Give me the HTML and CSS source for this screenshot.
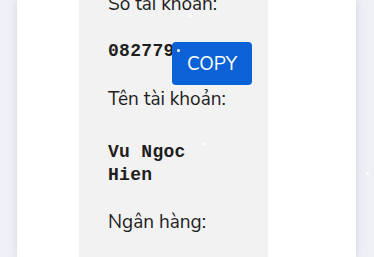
FILE: index.html
```html
<!DOCTYPE html>
<html lang="vi">
<head>
<meta charset="utf-8">
<link rel="stylesheet" href="styles.css">
</head>
<body>
<div class="card">
  <div class="panel">
    <div class="label first">Số tài khoản:</div>
    <div class="acct">
      <span class="mono">082779</span>
      <button class="copy">COPY</button>
    </div>
    <div class="label">Tên tài khoản:</div>
    <div class="mono name">Vu Ngoc Hien</div>
    <div class="label">Ngân hàng:</div>
  </div>
</div>
<span class="dot d1"></span>
<span class="dot d2"></span>
<span class="dot d3"></span>
<span class="dot d4"></span>
</body>
</html>
```
FILE: styles.css
```css
html, body {
  margin: 0;
  height: 100%;
  overflow: hidden;
}
body {
  background: #eef0f5;
  font-family: "Nunito Sans", Lato, "Noto Sans", sans-serif;
  color: #1e1e1e;
  position: relative;
}
.card {
  margin-left: 17px;
  width: 339px;
  height: 100%;
  background: #ffffff;
  box-shadow: 0 0 8px rgba(150, 160, 180, 0.35);
  display: flow-root;
}
.panel {
  margin-left: 62px;
  width: 160px;
  height: 100%;
  background: #f2f2f2;
  padding-left: 29px;
  box-sizing: content-box;
  display: flow-root;
}
.label {
  font-size: 19px;
  line-height: 24px;
  margin-top: 23px;
}
.label.first {
  margin-top: -8px;
}
.acct {
  position: relative;
  margin-top: 24px;
  height: 24px;
}
.mono {
  font-family: "Liberation Mono", "Courier New", monospace;
  font-weight: bold;
  font-size: 18px;
  line-height: 23px;
  letter-spacing: 0.3px;
}
.name {
  margin-top: 30px;
  width: 120px;
}
.label.bank {
  margin-top: 22px;
}
.copy {
  position: absolute;
  left: 64px;
  top: 2px;
  width: 80px;
  height: 43px;
  border: 0;
  border-radius: 4px;
  background: #0b62d6;
  color: #ffffff;
  font-family: "Nunito Sans", Lato, "Noto Sans", sans-serif;
  font-size: 19px;
  padding: 0;
}
.dot {
  position: absolute;
  width: 3px;
  height: 3px;
  border-radius: 50%;
  background: #ffffff;
}
.d1 { left: 189px; top: 14px; }
.d2 { left: 177px; top: 49px; }
.d3 { left: 202px; top: 142px; }
.d4 { left: 366px; top: 172px; }
```
